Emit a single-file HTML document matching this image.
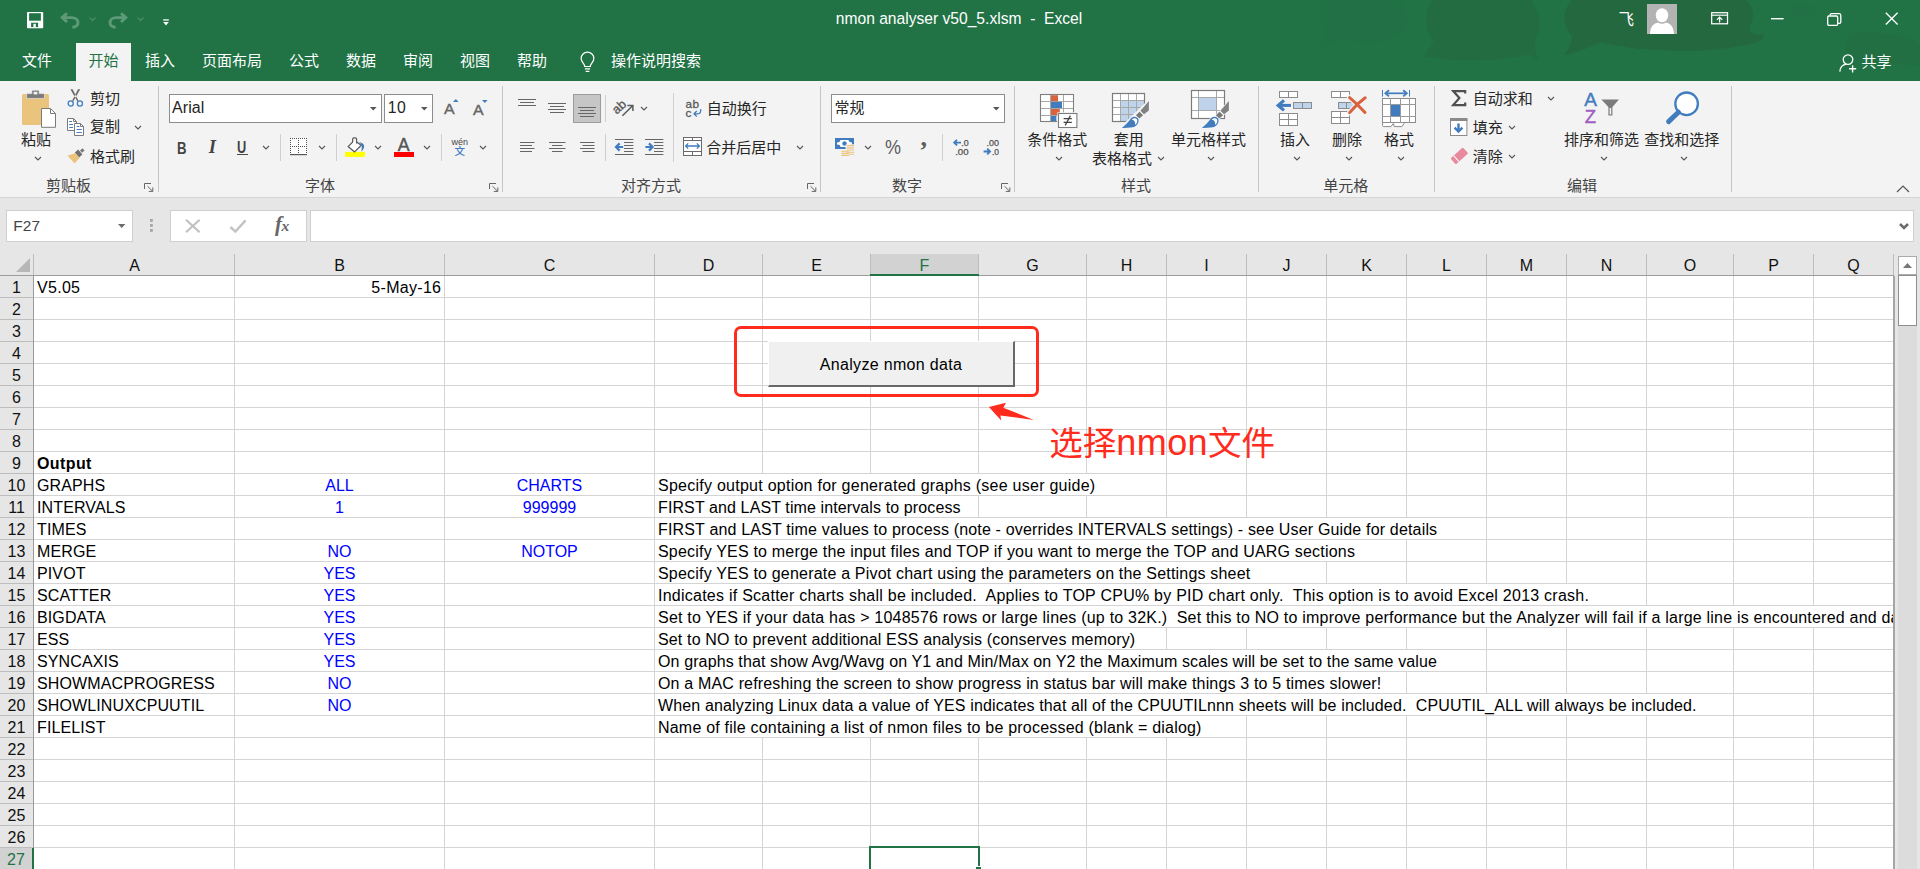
<!DOCTYPE html>
<html lang="zh-CN"><head><meta charset="utf-8"><title>nmon analyser v50_5.xlsm - Excel</title>
<style>
*{box-sizing:border-box;margin:0;padding:0}
html,body{width:1920px;height:869px;overflow:hidden;background:#fff}
body{position:relative;font-family:"Liberation Sans","Noto Sans CJK SC",sans-serif;font-size:15px;color:#262626}
.abs{position:absolute}
svg{position:absolute;overflow:visible}
/* title + tabs */
#title{position:absolute;left:0;top:0;width:1920px;height:81px;background:#217346;overflow:hidden}
#title .ttl{position:absolute;left:-1px;width:1920px;top:8.7px;text-align:center;color:#fff;font-size:15.62px;line-height:20px;white-space:pre}
.tab{position:absolute;top:43px;height:38px;line-height:35px;color:#fff;font-size:15px;white-space:nowrap}
.tab.act{background:#f3f3f3;color:#217346;left:76px;width:55px;text-align:center}
/* ribbon */
#ribbon{position:absolute;left:0;top:81px;width:1920px;height:117px;background:#f3f3f3;border-bottom:1px solid #d5d5d5}
#ribbon .t{position:absolute;white-space:nowrap;font-size:15px;line-height:20px;color:#262626}
#ribbon .gl{position:absolute;top:96px;font-size:15px;line-height:18px;color:#444;white-space:nowrap;transform:translateX(-50%)}
#ribbon .sep{position:absolute;top:6px;width:1px;height:105px;background:#c9c9c9}
#ribbon .msep{position:absolute;width:1px;height:27px;background:#d4d4d4}
/* formula bar */
#fbar{position:absolute;left:0;top:198px;width:1920px;height:57px;background:#e6e6e6}
#fbar .box{position:absolute;top:12px;height:32px;background:#fff;border:1px solid #cfcfcf}
/* grid */
#grid{position:absolute;left:0;top:0;width:1920px;height:869px;pointer-events:none}
.ch{position:absolute;top:254px;height:21px;line-height:23px;text-align:center;font-size:16px;color:#111;background:#e6e6e6}
.ch.sel{background:#d2d2d2;color:#217346;border-bottom:2px solid #217346;height:22px;z-index:3}
.chsep{position:absolute;top:254px;width:1px;height:21px;background:#bdbdbd}
.corner{position:absolute;left:16px;top:258px;width:0;height:0;border-left:14px solid transparent;border-bottom:14px solid #b7b7b7}
.rh{position:absolute;left:0;width:33px;height:21px;line-height:23px;text-align:center;font-size:16px;color:#111;background:#e6e6e6}
.rh.sel{background:#d2d2d2;color:#217346;border-right:2px solid #217346;width:34px;z-index:3}
.rhsep{position:absolute;left:0;width:33px;height:1px;background:#bdbdbd}
.hl{position:absolute;left:34px;width:1860px;height:1px;background:#d4d4d4}
.vl{position:absolute;top:276px;width:1px;height:593px;background:#d4d4d4}
.c{position:absolute;height:21px;line-height:23px;font-size:16px;color:#000;white-space:pre;overflow:hidden;font-family:"Liberation Sans",sans-serif}
.c.r{text-align:right}.c.b{font-weight:bold}.c.ctr{text-align:center}.c.blue{color:#0000ff}
.c.d{background:#fff;padding-left:3px}
#rb{position:absolute;left:0;top:0;width:1920px;height:197px}
#rb .t{position:absolute;white-space:nowrap;font-size:15px;line-height:20px;color:#262626}
#rb .gl{position:absolute;top:176px;font-size:15px;line-height:20px;color:#444;white-space:nowrap;transform:translateX(-50%)}
#rb .sep{position:absolute;top:86px;width:1px;height:106px;background:#c6c6c6}
#rb .msep{position:absolute;width:1px;background:#d0d0d0}

</style></head><body>
<div id="title">
<svg width="1920" height="81" viewBox="0 0 1920 81" style="left:0;top:0">
 <path d="M1322 0C1316 10 1318 22 1326 30C1326 38 1322 44 1318 48C1330 46 1338 42 1344 38C1360 44 1384 44 1398 36C1408 28 1408 12 1400 0Z" fill="#227045"/>
 <path d="M1432 0C1424 12 1424 30 1434 42C1430 48 1426 52 1424 56C1450 62 1500 62 1530 54C1532 58 1534 60 1538 60C1536 54 1536 48 1534 42C1544 28 1540 10 1530 0Z" fill="#236c42"/>
 <path d="M1572 0C1562 10 1562 26 1572 36C1572 44 1568 50 1564 55C1580 52 1592 46 1600 42C1640 52 1700 54 1740 46C1756 44 1764 40 1764 34C1756 36 1748 34 1750 26C1756 14 1752 6 1746 0Z" fill="#246840"/>
 <path d="M1792 6C1796 2 1806 2 1812 6C1818 10 1816 16 1808 16C1800 18 1790 12 1792 6Z" fill="#227045"/>
 <path d="M1846 40C1852 32 1870 30 1884 34C1900 34 1912 38 1920 44V66C1900 64 1870 64 1856 58C1848 54 1842 48 1846 40Z" fill="#226f44"/>
</svg>
<div class="ttl">nmon analyser v50_5.xlsm  -  Excel</div>
<!-- QAT -->
<svg width="17" height="17" viewBox="0 0 17 17" style="left:27px;top:12px"><rect x="0" y="0" width="16.2" height="16.2" rx=".8" fill="#fff"/><rect x="2.1" y="1.2" width="11.8" height="7.5" fill="#217346"/><rect x="4.1" y="10.7" width="7" height="4.4" fill="#217346"/><rect x="6.4" y="11.8" width="2.4" height="3.3" fill="#fff"/></svg>
<svg width="20" height="17" viewBox="0 0 20 17" style="left:60px;top:12px" fill="none" stroke="#5e9a78" stroke-width="2.9"><path d="M7 1.2L2.2 5.6L7 10"/><path d="M2.6 5.6H11.6C20 5.6 20 15.2 12.4 15.2"/></svg>
<svg width="8" height="5" viewBox="0 0 8 5" style="left:88.5px;top:17.2px" fill="none" stroke="#4f906c" stroke-width="1.2"><path d="M.6 .6L3.6 3.4L6.6 .6"/></svg>
<svg width="20" height="17" viewBox="0 0 20 17" style="left:108px;top:12px" fill="none" stroke="#5e9a78" stroke-width="2.9"><path d="M13 1.2L17.8 5.6L13 10"/><path d="M17.4 5.6H8.4C0 5.6 0 15.2 7.6 15.2"/></svg>
<svg width="8" height="5" viewBox="0 0 8 5" style="left:136.5px;top:17.2px" fill="none" stroke="#4f906c" stroke-width="1.2"><path d="M.6 .6L3.6 3.4L6.6 .6"/></svg>
<svg width="8" height="8" viewBox="0 0 8 8" style="left:162.6px;top:18.6px" fill="#fff"><rect x=".2" y=".3" width="5.6" height="1.3"/><path d="M.2 3.1H5.8L3 6.6Z"/></svg>
<!-- right controls -->
<div class="abs" style="left:1618.5px;top:8.5px;color:#fff;font-size:15.5px;line-height:22px">飞</div>
<div class="abs" style="left:1647px;top:4px;width:30px;height:30px;background:#b3b3b3;overflow:hidden">
 <svg width="30" height="30" viewBox="0 0 30 30" style="left:0;top:0" fill="#fff"><ellipse cx="15" cy="11.3" rx="6.2" ry="7"/><path d="M3 30 C3.5 22 7 19.5 11 18.6 C13.5 20.2 16.5 20.2 19 18.6 C23 19.5 26.5 22 27 30 Z"/></svg>
</div>
<svg width="17.2" height="12.5" viewBox="0 0 18 13" style="left:1711px;top:12.4px" fill="none" stroke="#fff" stroke-width="1.3"><rect x=".7" y=".7" width="16.6" height="11.6"/><path d="M.7 3.3h16.6" stroke-width="1.2"/><path d="M9 11V5.6M6.2 8.2L9 5.4L11.8 8.2"/></svg>
<svg width="14" height="2" viewBox="0 0 14 2" style="left:1771px;top:17.5px"><rect width="12.6" height="1.4" fill="#fff"/></svg>
<svg width="15" height="13" viewBox="0 0 15 13" style="left:1827px;top:12.5px" fill="none" stroke="#fff" stroke-width="1.3"><rect x=".7" y="3" width="10" height="9.3" rx="1.2"/><path d="M3.2 2.6V2Q3.2.7 4.6.7H12Q13.8.7 13.8 2.5V9Q13.8 10.3 12.6 10.3H11"/></svg>
<svg width="14" height="14" viewBox="0 0 14 14" style="left:1885px;top:12px" fill="none" stroke="#fff" stroke-width="1.4"><path d="M.8.8L12.6 12.6M12.6.8L.8 12.6"/></svg>
<!-- share -->
<svg width="20" height="19" viewBox="0 0 20 19" style="left:1839px;top:54px" fill="none" stroke="#fff" stroke-width="1.3"><circle cx="9" cy="5.6" r="4.8"/><path d="M.8 17.6C1.2 13 4 10.6 7.4 10.2"/><path d="M13.6 11.2v7.2M10 14.8h7.2" stroke-width="1.4"/></svg>
<div class="tab" style="left:1861.6px;top:44.4px;font-size:15px">共享</div>
<!-- tabs -->
<div class="tab" style="left:22px">文件</div>
<div class="tab act">开始</div>
<div class="tab" style="left:145px">插入</div>
<div class="tab" style="left:202px">页面布局</div>
<div class="tab" style="left:289px">公式</div>
<div class="tab" style="left:346px">数据</div>
<div class="tab" style="left:403px">审阅</div>
<div class="tab" style="left:460px">视图</div>
<div class="tab" style="left:517px">帮助</div>
<svg width="15" height="20.6" viewBox="0 0 16 22" style="left:580.4px;top:52px" fill="none" stroke="#fff" stroke-width="1.3"><path d="M5 15.5C5 12 1.2 11 1.2 7A6.8 6.8 0 0 1 14.8 7C14.8 11 11 12 11 15.5Z"/><path d="M5.2 18h5.6M6 20.6h4"/></svg>
<div class="tab" style="left:611px">操作说明搜索</div>
</div>
<div id="ribbon"></div><div id="rb">
<svg width="35" height="38" viewBox="0 0 35 38" style="left:22px;top:90px" >
<rect x="0" y="4" width="27" height="31" rx="1.6" fill="#eac37c"/>
<path d="M4.6 8.4V4.6Q4.6 3.6 5.6 3.6H9.8V1.2Q9.8 .2 10.8 .2H16.2Q17.2 .2 17.2 1.2V3.6H21.4Q22.4 3.6 22.4 4.6V8.4Z" fill="#7b7b7b" stroke="#f3f3f3" stroke-width=".6"/>
<rect x="11.6" y="1.8" width="3.8" height="2.6" fill="#f3f3f3"/>
<path d="M19.5 18.5H28.5L33.5 23.5V37.3H19.5Z" fill="#fff" stroke="#7a7a7a" stroke-width="1"/>
<path d="M28.5 18.5V23.5H33.5" fill="none" stroke="#7a7a7a" stroke-width="1"/></svg>
<div class="t" style="left:36px;top:130px;transform:translateX(-50%);">粘贴</div>
<svg width="8" height="5" viewBox="0 0 8 5" style="left:34px;top:156.0px" fill="none" stroke="#555" stroke-width="1.1"><path d="M1 1L4 4L7 1"/></svg>
<svg width="17" height="18" viewBox="0 0 17 18" style="left:67px;top:89px" ><path d="M3.4 .3L5.6 .3L11.4 11.6L10.2 12.2Z M13.2 .3L11 .3L5.2 11.6L6.4 12.2Z" fill="#6b6b6b"/>
<circle cx="3.7" cy="14.5" r="2.55" fill="none" stroke="#417dbe" stroke-width="1.3"/><circle cx="12.9" cy="14.5" r="2.55" fill="none" stroke="#417dbe" stroke-width="1.3"/></svg>
<div class="t" style="left:90px;top:88.7px;">剪切</div>
<svg width="18" height="19" viewBox="0 0 18 19" style="left:67px;top:118px" ><path d="M.5 .5H6.5L9.5 3.5V12.5H.5Z" fill="#fff" stroke="#7a7a7a" stroke-width="1"/><path d="M6.5 .5V3.5H9.5" fill="none" stroke="#7a7a7a" stroke-width="1"/>
<path d="M2.2 3.5H5M2.2 6.5H6M2.2 9.5H6" stroke="#417dbe" stroke-width="1"/>
<path d="M7.5 5.5H13.5L16.5 8.5V17.5H7.5Z" fill="#fff" stroke="#7a7a7a" stroke-width="1"/><path d="M13.5 5.5V8.5H16.5" fill="none" stroke="#7a7a7a" stroke-width="1"/>
<path d="M9.6 8.5H12.4M9.6 11.5H14.8M9.6 14.5H14.8" stroke="#417dbe" stroke-width="1"/></svg>
<div class="t" style="left:90px;top:117px;">复制</div>
<svg width="8" height="5" viewBox="0 0 8 5" style="left:134px;top:125.0px" fill="none" stroke="#555" stroke-width="1.1"><path d="M1 1L4 4L7 1"/></svg>
<svg width="18" height="16" viewBox="0 0 18 16" style="left:67px;top:148px" ><path d="M13 2.4L15.6 .2L17.6 2.6L15 4.8Z" fill="#7a7a7a"/><path d="M7.8 4.4L11.2 1.6L15.4 6.6L12 9.4Z" fill="#6f6f6f"/>
<path d="M.6 7.8L8.4 5L12.6 10L7.6 15.4Z" fill="#eac37c"/></svg>
<div class="t" style="left:90px;top:146.5px;">格式刷</div>
<div class="gl" style="left:68.5px">剪贴板</div>
<svg width="10" height="9" viewBox="0 0 10 9" style="left:144px;top:183px" fill="none" stroke="#666" stroke-width="1"><path d="M.5 6V.5H7"/><path d="M3.5 3.2L8.6 8.2M8.8 4.4V8.4H4.8"/></svg>
<div class="sep" style="left:158px"></div>
<div class="abs" style="left:169px;top:94px;width:213px;height:29px;background:#fff;border:1px solid #8c8c8c"></div>
<div class="abs" style="left:384px;top:94px;width:49px;height:29px;background:#fff;border:1px solid #8c8c8c"></div>
<div class="t" style="left:172px;top:98.3px;font-size:16px;line-height:20px;color:#262626;letter-spacing:.1px;font-family:'Liberation Sans',sans-serif">Arial</div>
<div class="t" style="left:387.8px;top:98.4px;font-size:15.8px;line-height:20px;color:#262626;letter-spacing:.3px;font-family:'Liberation Sans',sans-serif">10</div>
<svg width="7" height="4" viewBox="0 0 7 4" style="left:370px;top:107px" ><path d="M0 0H6.6L3.3 3.6Z" fill="#555"/></svg>
<svg width="7" height="4" viewBox="0 0 7 4" style="left:421px;top:107px" ><path d="M0 0H6.6L3.3 3.6Z" fill="#555"/></svg>
<div class="t" style="left:443.9px;top:98.5px;font-size:15px;line-height:20px;color:#666;-webkit-text-stroke:.4px #666;transform:scaleX(1.06);transform-origin:left;font-family:'Liberation Sans',sans-serif">A</div>
<svg width="6" height="3" viewBox="0 0 6 3" style="left:452.5px;top:99px" ><path d="M0 3H5.6L2.8 0Z" fill="#417dbe"/></svg>
<div class="t" style="left:472.9px;top:99.5px;font-size:15px;line-height:20px;color:#666;-webkit-text-stroke:.4px #666;transform:scaleX(1.06);transform-origin:left;font-family:'Liberation Sans',sans-serif">A</div>
<svg width="6" height="3" viewBox="0 0 6 3" style="left:481.5px;top:100px" ><path d="M0 0H5.6L2.8 3Z" fill="#417dbe"/></svg>
<div class="t" style="left:177.2px;top:137.5px;font-size:16.5px;font-weight:bold;color:#444;transform:scaleX(.8);transform-origin:left;font-family:'Liberation Sans',sans-serif">B</div>
<div class="t" style="left:208.8px;top:137.2px;font-size:18.5px;font-weight:bold;font-style:italic;color:#444;font-family:'Liberation Serif',serif">I</div>
<div class="t" style="left:237.4px;top:137.6px;font-size:16px;font-weight:bold;color:#444;transform:scaleX(.8);transform-origin:left;font-family:'Liberation Sans',sans-serif">U</div>
<div class="abs" style="left:237px;top:154px;width:11px;height:1px;background:#4a4a4a"></div>
<svg width="8" height="5" viewBox="0 0 8 5" style="left:262px;top:145.0px" fill="none" stroke="#555" stroke-width="1.1"><path d="M1 1L4 4L7 1"/></svg>
<div class="msep" style="left:280px;top:134px;height:27px"></div>
<svg width="18" height="18" viewBox="0 0 18 18" style="left:290px;top:138px" ><rect x="0" y="0" width="17" height="16" fill="#fff"/><g stroke="#4f4f4f" stroke-width="1" stroke-dasharray="1 1" fill="none"><path d="M0 .5H17M0 8.5H17"/><path d="M.5 0V16M8.5 0V16M16.5 0V16"/></g><path d="M0 16.6H17" stroke="#5a5a5a" stroke-width="1.2"/></svg>
<svg width="8" height="5" viewBox="0 0 8 5" style="left:318px;top:145.0px" fill="none" stroke="#555" stroke-width="1.1"><path d="M1 1L4 4L7 1"/></svg>
<div class="msep" style="left:336px;top:134px;height:27px"></div>
<svg width="21" height="20" viewBox="0 0 21 20" style="left:345px;top:137px" ><rect x="0" y="14.9" width="20" height="5" fill="#ffff00"/>
<path d="M3.1 9.6L9.4 3.3L16.2 8.3L9.6 14.9Z" fill="#fff"/>
<path d="M7.6 5.1L3.1 9.6L9.6 14.9L16.2 8.3L11.6 4.9" fill="none" stroke="#5a5a5a" stroke-width="1.3" stroke-linejoin="round"/>
<path d="M7.6 5.4V2.2Q7.6 .9 9 .9H10.2Q11.6 .9 11.6 2.2V6.6" fill="none" stroke="#5a5a5a" stroke-width="1.2"/>
<path d="M14.1 4.9Q19.4 6 19.2 9.4Q19 12.4 16.3 14.7Q17.2 11 16.5 8.6Q15.6 6.2 14.1 4.9Z" fill="#417dbe"/></svg>
<svg width="8" height="5" viewBox="0 0 8 5" style="left:374px;top:145.0px" fill="none" stroke="#555" stroke-width="1.1"><path d="M1 1L4 4L7 1"/></svg>
<div class="t" style="left:397.8px;top:135.2px;font-size:17.8px;color:#555;-webkit-text-stroke:.45px #555;font-family:'Liberation Sans',sans-serif">A</div>
<div class="abs" style="left:394px;top:152px;width:20px;height:5px;background:#ff0000"></div>
<svg width="8" height="5" viewBox="0 0 8 5" style="left:423px;top:145.0px" fill="none" stroke="#555" stroke-width="1.1"><path d="M1 1L4 4L7 1"/></svg>
<div class="msep" style="left:441px;top:134px;height:27px"></div>
<div class="t" style="left:451.6px;top:132px;font-size:9px;color:#444;font-family:'Liberation Sans',sans-serif;letter-spacing:-.1px">wén</div>
<div class="t" style="left:454.4px;top:140.7px;font-size:10.5px;color:#417dbe;font-weight:500">文</div>
<svg width="8" height="5" viewBox="0 0 8 5" style="left:479px;top:145.0px" fill="none" stroke="#555" stroke-width="1.1"><path d="M1 1L4 4L7 1"/></svg>
<div class="gl" style="left:320px">字体</div>
<svg width="10" height="9" viewBox="0 0 10 9" style="left:488.5px;top:183px" fill="none" stroke="#666" stroke-width="1"><path d="M.5 6V.5H7"/><path d="M3.5 3.2L8.6 8.2M8.8 4.4V8.4H4.8"/></svg>
<div class="sep" style="left:502px"></div>
<svg width="24" height="24" viewBox="0 0 24 24" style="left:518px;top:96px" ><path d="M0 3.5H18M2 6.5H16M0 9.5H18" stroke="#666" stroke-width="1" fill="none"/></svg>
<svg width="24" height="24" viewBox="0 0 24 24" style="left:548px;top:96px" ><path d="M0 7.5H18M2 10.5H16M0 13.5H18M2 16.5H16" stroke="#666" stroke-width="1" fill="none"/></svg>
<div class="abs" style="left:573px;top:94px;width:28px;height:29px;background:#c6c6c6;border:1px solid #9c9c9c"></div>
<svg width="24" height="24" viewBox="0 0 24 24" style="left:578px;top:96px" ><path d="M0 11.5H18M2 14.5H16M0 17.5H18M2 20.5H16" stroke="#666" stroke-width="1" fill="none"/></svg>
<div class="msep" style="left:605px;top:95px;height:27px"></div>
<svg width="22" height="21" viewBox="0 0 22 21" style="left:613px;top:97px" ><g transform="rotate(-43 8 8.4)"><text x="-1.4" y="12.4" font-family="Liberation Sans,sans-serif" font-size="12.6" fill="#595959" stroke="#595959" stroke-width=".35">ab</text></g><path d="M9.4 18.8L19.6 8.8M14.4 8.4H19.9V14" fill="none" stroke="#595959" stroke-width="1.5"/></svg>
<svg width="8" height="5" viewBox="0 0 8 5" style="left:640px;top:106.0px" fill="none" stroke="#555" stroke-width="1.1"><path d="M1 1L4 4L7 1"/></svg>
<svg width="24" height="24" viewBox="0 0 24 24" style="left:519.5px;top:139px" ><path d="M0 3.5H14.5M0 6.5H12M0 9.5H14.5M0 12.5H12" stroke="#666" stroke-width="1" fill="none"/></svg>
<svg width="24" height="24" viewBox="0 0 24 24" style="left:548.5px;top:139px" ><path d="M0 3.5H16.5M3 6.5H13.5M0 9.5H16.5M3 12.5H13.5" stroke="#666" stroke-width="1" fill="none"/></svg>
<svg width="24" height="24" viewBox="0 0 24 24" style="left:579.5px;top:139px" ><path d="M0 3.5H14.5M2.5 6.5H14.5M0 9.5H14.5M2.5 12.5H14.5" stroke="#666" stroke-width="1" fill="none"/></svg>
<div class="msep" style="left:605px;top:134px;height:27px"></div>
<svg width="19" height="17" viewBox="0 0 19 17" style="left:614.5px;top:139px" ><path d="M0 .5H18.4M9 3.5H18.4M9 6.5H18.4M9 9.5H18.4M9 12.5H18.4M0 15.5H18.4" stroke="#666" stroke-width="1" fill="none"/><path d="M1 8H8.2M4.6 4.4L1 8L4.6 11.6" stroke="#417dbe" stroke-width="2.2" fill="none"/></svg>
<svg width="19" height="17" viewBox="0 0 19 17" style="left:644.5px;top:139px" ><path d="M0 .5H18.4M9 3.5H18.4M9 6.5H18.4M9 9.5H18.4M9 12.5H18.4M0 15.5H18.4" stroke="#666" stroke-width="1" fill="none"/><path d="M.4 8H7.6M4 4.4L7.6 8L4 11.6" stroke="#417dbe" stroke-width="2.2" fill="none"/></svg>
<div class="msep" style="left:673px;top:93px;height:69px"></div>
<div class="t" style="left:685.5px;top:94px;font-size:11.8px;line-height:20px;color:#595959;-webkit-text-stroke:.3px #595959;font-family:'Liberation Sans',sans-serif;letter-spacing:.4px">ab</div>
<div class="t" style="left:685.5px;top:102.5px;font-size:11.8px;line-height:20px;color:#595959;-webkit-text-stroke:.3px #595959;font-family:'Liberation Sans',sans-serif">c</div>
<svg width="9" height="8" viewBox="0 0 9 8" style="left:693px;top:109px" ><path d="M7.6 .2Q8.4 4.8 4.6 4.8H1.2M3.8 2L1 4.8L3.8 7.6" fill="none" stroke="#417dbe" stroke-width="1.3"/></svg>
<div class="t" style="left:706.8px;top:98.6px;">自动换行</div>
<svg width="19" height="19" viewBox="0 0 19 19" style="left:683px;top:137px" ><rect x=".5" y=".5" width="18" height="18" fill="#fff" stroke="#6b6b6b" stroke-width="1"/><path d="M.5 3.5H18.5M.5 14.5H18.5M9.5 .5V3.5M9.5 14.5V18.5" stroke="#6b6b6b" stroke-width="1" fill="none"/><path d="M2.6 9H16.4M5.2 6.4L2.6 9L5.2 11.6M13.8 6.4L16.4 9L13.8 11.6" stroke="#417dbe" stroke-width="1.3" fill="none"/></svg>
<div class="t" style="left:706.3px;top:137.6px;">合并后居中</div>
<svg width="8" height="5" viewBox="0 0 8 5" style="left:796px;top:145.0px" fill="none" stroke="#555" stroke-width="1.1"><path d="M1 1L4 4L7 1"/></svg>
<div class="gl" style="left:651px">对齐方式</div>
<svg width="10" height="9" viewBox="0 0 10 9" style="left:806.5px;top:183px" fill="none" stroke="#666" stroke-width="1"><path d="M.5 6V.5H7"/><path d="M3.5 3.2L8.6 8.2M8.8 4.4V8.4H4.8"/></svg>
<div class="sep" style="left:820px"></div>
<div class="abs" style="left:831px;top:94px;width:174px;height:29px;background:#fff;border:1px solid #8c8c8c"></div>
<div class="t" style="left:834.5px;top:98.3px;">常规</div>
<svg width="7" height="4" viewBox="0 0 7 4" style="left:993px;top:107px" ><path d="M0 0H6.6L3.3 3.6Z" fill="#555"/></svg>
<svg width="20" height="19" viewBox="0 0 20 19" style="left:835px;top:138px" ><rect x="0" y="0" width="19" height="11" fill="#417dbe"/><rect x="2" y="2" width="15" height="7" fill="#fff"/><path d="M2 2H5.4Q5.4 4.4 2 4.4ZM17 2H13.6Q13.6 4.4 17 4.4ZM2 9H5.4Q5.4 6.6 2 6.6ZM17 9H13.6Q13.6 6.6 17 6.6Z" fill="#417dbe"/><circle cx="9.5" cy="5.5" r="2.2" fill="#417dbe"/>
<rect x="10.6" y="6.2" width="9.4" height="10.6" rx="1.6" fill="#f3f3f3"/><rect x="5.4" y="11.6" width="9.4" height="8" rx="1.6" fill="#f3f3f3"/>
<g stroke="#eac37c" stroke-width="1.15" stroke-linecap="round" fill="none"><path d="M12 7.6H18.6M12 9.8H18.6M12 12H18.6M12 14.2H18.6M14.4 16.2H18.6"/><path d="M6.8 13.2H13.4M6.8 15.3H13.4M6.8 17.4H13.4"/></g></svg>
<svg width="8" height="5" viewBox="0 0 8 5" style="left:864px;top:145.0px" fill="none" stroke="#555" stroke-width="1.1"><path d="M1 1L4 4L7 1"/></svg>
<div class="t" style="left:885.2px;top:136.2px;font-size:20px;line-height:22px;color:#5c5c5c;font-family:'Liberation Sans',sans-serif;transform:scaleX(.9);transform-origin:left">%</div>
<div class="t" style="left:920.6px;top:123.4px;font-size:26px;line-height:30px;color:#5c5c5c;font-family:'Liberation Serif',serif;font-weight:bold">,</div>
<div class="msep" style="left:942px;top:134px;height:27px"></div>
<svg width="17" height="17" viewBox="0 0 17 17" style="left:952.5px;top:139px" ><text x='8.2' y='6.9' textLength='7.4' lengthAdjust='spacingAndGlyphs' font-family='Liberation Sans,sans-serif' font-size='9.6' fill='#4f4f4f' stroke='#4f4f4f' stroke-width='.25'>.0</text><text x='2.2' y='15.9' textLength='13.4' lengthAdjust='spacingAndGlyphs' font-family='Liberation Sans,sans-serif' font-size='9.6' fill='#4f4f4f' stroke='#4f4f4f' stroke-width='.25'>.00</text><path d='M1.4 3.6H8M4 .8L1.2 3.6L4 6.4' stroke='#417dbe' stroke-width='1.9' fill='none'/></svg>
<svg width="17" height="17" viewBox="0 0 17 17" style="left:982.5px;top:139px" ><text x='3.6' y='6.9' textLength='12.4' lengthAdjust='spacingAndGlyphs' font-family='Liberation Sans,sans-serif' font-size='9.6' fill='#4f4f4f' stroke='#4f4f4f' stroke-width='.25'>.00</text><text x='9' y='15.9' textLength='7' lengthAdjust='spacingAndGlyphs' font-family='Liberation Sans,sans-serif' font-size='9.6' fill='#4f4f4f' stroke='#4f4f4f' stroke-width='.25'>.0</text><path d='M.6 12.5H7M4.2 9.7L7 12.5L4.2 15.3' stroke='#417dbe' stroke-width='1.9' fill='none'/></svg>
<div class="gl" style="left:907px">数字</div>
<svg width="10" height="9" viewBox="0 0 10 9" style="left:1000.5px;top:183px" fill="none" stroke="#666" stroke-width="1"><path d="M.5 6V.5H7"/><path d="M3.5 3.2L8.6 8.2M8.8 4.4V8.4H4.8"/></svg>
<div class="sep" style="left:1014px"></div>
<svg width="38" height="36" viewBox="0 0 38 36" style="left:1040px;top:93px" ><rect x=".5" y="1.5" width="33" height="27" fill="#fff"/>
<path d="M.5 8.5H33.5M.5 15.5H33.5M.5 22.5H33.5M10.5 1.5V28.5M23.5 1.5V28.5" stroke="#a8a8a8" stroke-width="1" fill="none"/><rect x=".5" y="1.5" width="33" height="27" fill="none" stroke="#808080" stroke-width="1.1"/>
<rect x="11" y="2.2" width="7" height="6" fill="#d9623f"/><rect x="11" y="9" width="11" height="6" fill="#417dbe"/><rect x="11" y="16" width="8.8" height="6" fill="#d9623f"/><rect x="11" y="23" width="5.4" height="5" fill="#417dbe"/>
<rect x="18.5" y="20.5" width="18.4" height="14" fill="#fff" stroke="#f5f5f5" stroke-width="2.4"/><rect x="18.5" y="20.5" width="18.4" height="14" fill="#fff" stroke="#7c7c7c" stroke-width="1.1"/>
<path d="M23.6 25.6H31.8M23.6 29.4H31.8M30.4 22.6L25.2 32.4" stroke="#444" stroke-width="1.25" fill="none"/></svg>
<div class="t" style="left:1057.2px;top:129.8px;transform:translateX(-50%);">条件格式</div>
<svg width="8" height="5" viewBox="0 0 8 5" style="left:1055px;top:156.0px" fill="none" stroke="#555" stroke-width="1.1"><path d="M1 1L4 4L7 1"/></svg>
<svg width="40" height="37" viewBox="0 0 40 37" style="left:1112px;top:92px" ><rect x=".5" y="1.5" width="32" height="28" fill="#fff"/>
<rect x="8.5" y="8.5" width="24" height="21" fill="#bfd4ea"/>
<path d="M.5 8.5H32.5M.5 15.5H32.5M.5 22.5H32.5M8.5 1.5V29.5M16.5 1.5V29.5M24.5 1.5V29.5" stroke="#a8a8a8" stroke-width="1" fill="none"/><rect x=".5" y="1.5" width="32" height="28" fill="none" stroke="#7c7c7c" stroke-width="1.2"/><path d="M33.6 10.4V31H12.6Z" fill="#f3f3f3"/><g transform="translate(0 0)" stroke="#f5f5f5" stroke-width="1.3" paint-order="stroke" stroke-linejoin="round"><path d="M36.9 9V18.4L32 22.3L28.4 18.7Z" fill="#828282"/><path d="M27.5 19.8L31.1 23.3L27.3 26.4L23.9 23.3Z" fill="#7a7a7a"/>
<path d="M9.9 35.9Q15 31.6 17.4 28.4Q19.6 24.6 22.8 24.8Q26.6 25.4 26.6 29Q26.2 32.6 22.6 34.8Q20 36 9.9 35.9Z" fill="#417dbe"/><path d="M19.8 27.6Q21.4 25.9 23.4 26.2Q25.4 26.8 25.4 29Q25.2 31.4 23.2 33Q23.6 28.6 19.8 27.6Z" fill="#fff" stroke="none"/></g></svg>
<div class="t" style="left:1128.7px;top:129.8px;transform:translateX(-50%);">套用</div>
<div class="t" style="left:1092px;top:148.5px;">表格格式</div>
<svg width="8" height="5" viewBox="0 0 8 5" style="left:1157px;top:156.0px" fill="none" stroke="#555" stroke-width="1.1"><path d="M1 1L4 4L7 1"/></svg>
<svg width="40" height="39" viewBox="0 0 40 39" style="left:1191px;top:90px" ><rect x=".5" y=".5" width="33" height="28" fill="#fff"/>
<rect x="7.5" y="7.5" width="18" height="13" fill="#bfd4ea"/>
<path d="M.5 7.5H33.5M.5 20.5H33.5M7.5 .5V28.5M25.5 .5V28.5" stroke="#a8a8a8" stroke-width="1" fill="none"/><rect x=".5" y=".5" width="33" height="28" fill="none" stroke="#7c7c7c" stroke-width="1.2"/><g transform="translate(1 2)" stroke="#f5f5f5" stroke-width="1.3" paint-order="stroke" stroke-linejoin="round"><path d="M36.9 9V18.4L32 22.3L28.4 18.7Z" fill="#828282"/><path d="M27.5 19.8L31.1 23.3L27.3 26.4L23.9 23.3Z" fill="#7a7a7a"/>
<path d="M9.9 35.9Q15 31.6 17.4 28.4Q19.6 24.6 22.8 24.8Q26.6 25.4 26.6 29Q26.2 32.6 22.6 34.8Q20 36 9.9 35.9Z" fill="#417dbe"/><path d="M19.8 27.6Q21.4 25.9 23.4 26.2Q25.4 26.8 25.4 29Q25.2 31.4 23.2 33Q23.6 28.6 19.8 27.6Z" fill="#fff" stroke="none"/></g></svg>
<div class="t" style="left:1208.6px;top:129.8px;transform:translateX(-50%);">单元格样式</div>
<svg width="8" height="5" viewBox="0 0 8 5" style="left:1207px;top:156.0px" fill="none" stroke="#555" stroke-width="1.1"><path d="M1 1L4 4L7 1"/></svg>
<div class="gl" style="left:1136px">样式</div>
<div class="sep" style="left:1258px"></div>
<svg width="40" height="37" viewBox="0 0 40 37" style="left:1275px;top:90px" ><rect x="4.5" y="1.5" width="18" height="6" fill="#fff" stroke="#8c8c8c" stroke-width="1"/><path d="M13.5 1.5V7.5" stroke="#8c8c8c" stroke-width="1"/><rect x="18.5" y="12.5" width="18" height="6" fill="#bfd4ea" stroke="#8c8c8c" stroke-width="1"/><path d="M27.5 12.5V18.5" stroke="#8c8c8c" stroke-width="1"/><rect x="4.5" y="23.5" width="18" height="12" fill="#fff" stroke="#8c8c8c" stroke-width="1"/><path d="M13.5 23.5V35.5" stroke="#8c8c8c" stroke-width="1"/><path d="M4.5 29.5H22.5" stroke="#8c8c8c" stroke-width="1"/><path d="M3.4 15.4H16" stroke="#417dbe" stroke-width="3" fill="none"/><path d="M9 10.4L3.2 15.4L9 20.4" stroke="#417dbe" stroke-width="3.2" fill="none" stroke-linejoin="miter"/></svg>
<div class="t" style="left:1295px;top:129.8px;transform:translateX(-50%);">插入</div>
<svg width="8" height="5" viewBox="0 0 8 5" style="left:1293px;top:156.0px" fill="none" stroke="#555" stroke-width="1.1"><path d="M1 1L4 4L7 1"/></svg>
<svg width="38" height="36" viewBox="0 0 38 36" style="left:1330px;top:90px" ><rect x="1.5" y="1.5" width="18" height="6" fill="#fff" stroke="#8c8c8c" stroke-width="1"/><path d="M10.5 1.5V7.5" stroke="#8c8c8c" stroke-width="1"/><rect x="8.5" y="12.5" width="16" height="6" fill="#bfd4ea" stroke="#8c8c8c" stroke-width="1"/><path d="M16.5 12.5V18.5" stroke="#8c8c8c" stroke-width="1"/><rect x="1.5" y="21.5" width="18" height="12" fill="#fff" stroke="#8c8c8c" stroke-width="1"/><path d="M10.5 21.5V33.5" stroke="#8c8c8c" stroke-width="1"/><path d="M1.5 27.5H19.5" stroke="#8c8c8c" stroke-width="1"/><path d="M19.6 7.6Q27 13.6 35 22.4M35.2 7.8Q27 13.6 19.6 22.6" stroke="#f3f3f3" stroke-width="5.4" fill="none" stroke-linecap="round"/><path d="M19.6 7.6Q27 13.6 35 22.4M35.2 7.8Q27 13.6 19.6 22.6" stroke="#d9623f" stroke-width="3" fill="none" stroke-linecap="round"/></svg>
<div class="t" style="left:1347px;top:129.8px;transform:translateX(-50%);">删除</div>
<svg width="8" height="5" viewBox="0 0 8 5" style="left:1345px;top:156.0px" fill="none" stroke="#555" stroke-width="1.1"><path d="M1 1L4 4L7 1"/></svg>
<svg width="37" height="38" viewBox="0 0 37 38" style="left:1381px;top:89px" ><path d="M1.5 1V7.6M28.5 1V7.6" stroke="#417dbe" stroke-width="1"/><path d="M4.6 4.3H25.6" stroke="#417dbe" stroke-width="1.7" fill="none"/><path d="M8 1.2L4.4 4.3L8 7.4M22.2 1.2L25.8 4.3L22.2 7.4" stroke="#417dbe" stroke-width="1.8" fill="none"/>
<path d="M1.6 33.5V36.6Q1.6 37.6 2.6 37.6H10.1L12.1 34.6L12.5 34.7L13.3 37.6H21L23.6 33.5Z" fill="#fff" stroke="#8c8c8c" stroke-width="1" stroke-linejoin="round"/>
<rect x="1.5" y="9.5" width="33" height="24" fill="#fff" stroke="#8c8c8c" stroke-width="1"/>
<path d="M1.5 15.5H34.5M1.5 27.5H34.5M9.5 9.5V33.5M19.5 9.5V33.5M28.5 9.5V33.5" stroke="#9a9a9a" stroke-width="1" fill="none"/>
<rect x="10" y="16" width="9" height="11" fill="#417dbe"/></svg>
<div class="t" style="left:1399px;top:129.8px;transform:translateX(-50%);">格式</div>
<svg width="8" height="5" viewBox="0 0 8 5" style="left:1397px;top:156.0px" fill="none" stroke="#555" stroke-width="1.1"><path d="M1 1L4 4L7 1"/></svg>
<div class="gl" style="left:1345.8px">单元格</div>
<div class="sep" style="left:1434px"></div>
<svg width="17" height="17" viewBox="0 0 17 17" style="left:1450px;top:90px" ><path d="M15.2 3.6V1.1H3.2L9.4 8.1L3.2 15.1H15.2V12.6" fill="none" stroke="#505050" stroke-width="2.2" stroke-linejoin="miter"/></svg>
<div class="t" style="left:1472.7px;top:88.6px;">自动求和</div>
<svg width="8" height="5" viewBox="0 0 8 5" style="left:1547px;top:96.0px" fill="none" stroke="#555" stroke-width="1.1"><path d="M1 1L4 4L7 1"/></svg>
<svg width="18" height="18" viewBox="0 0 18 18" style="left:1450px;top:118px" ><rect x=".5" y="1.5" width="16.4" height="16" fill="#fff" stroke="#8a8a8a" stroke-width="1"/><rect x="0" y="0" width="17.4" height="3" fill="#8a8a8a"/><path d="M8.5 5.4V13.4M4.6 9.6L8.5 13.6L12.4 9.6" stroke="#417dbe" stroke-width="2.4" fill="none"/></svg>
<div class="t" style="left:1472.8px;top:117.8px;">填充</div>
<svg width="8" height="5" viewBox="0 0 8 5" style="left:1508px;top:125.0px" fill="none" stroke="#555" stroke-width="1.1"><path d="M1 1L4 4L7 1"/></svg>
<svg width="17" height="17" viewBox="0 0 17 17" style="left:1451px;top:148px" ><g transform="rotate(-42 8 8)"><rect x="0" y="4.2" width="16.6" height="8" rx="1" fill="#e8899d"/><rect x="3.6" y="4.2" width="1.2" height="8" fill="#f3f3f3"/></g></svg>
<div class="t" style="left:1472.8px;top:146.8px;">清除</div>
<svg width="8" height="5" viewBox="0 0 8 5" style="left:1508px;top:154.0px" fill="none" stroke="#555" stroke-width="1.1"><path d="M1 1L4 4L7 1"/></svg>
<div class="t" style="left:1584.3px;top:88.5px;font-size:19px;line-height:22px;color:#417dbe;-webkit-text-stroke:.45px #417dbe;font-family:'Liberation Sans',sans-serif">A</div>
<div class="t" style="left:1584.8px;top:105.6px;font-size:18.5px;line-height:22px;color:#a05cc0;-webkit-text-stroke:.45px #a05cc0;font-family:'Liberation Sans',sans-serif">Z</div>
<svg width="19" height="17" viewBox="0 0 19 17" style="left:1601px;top:99px" ><path d="M.4 .4H18L11.4 8V16.4H7.4V8Z" fill="#7b7b7b"/><path d="M8.6 9V15.4H10.2V9Z" fill="#f3f3f3"/></svg>
<div class="t" style="left:1601.5px;top:130px;transform:translateX(-50%);">排序和筛选</div>
<svg width="8" height="5" viewBox="0 0 8 5" style="left:1600px;top:156.0px" fill="none" stroke="#555" stroke-width="1.1"><path d="M1 1L4 4L7 1"/></svg>
<svg width="36" height="36" viewBox="0 0 36 36" style="left:1665px;top:90px" ><circle cx="21.6" cy="13.8" r="11.3" fill="#fff" stroke="#417dbe" stroke-width="2.3"/><path d="M13.4 22.2L3.6 31.6" stroke="#417dbe" stroke-width="5" stroke-linecap="round"/></svg>
<div class="t" style="left:1681.7px;top:130px;transform:translateX(-50%);">查找和选择</div>
<svg width="8" height="5" viewBox="0 0 8 5" style="left:1680px;top:156.0px" fill="none" stroke="#555" stroke-width="1.1"><path d="M1 1L4 4L7 1"/></svg>
<div class="gl" style="left:1582px">编辑</div>
<div class="sep" style="left:1731px"></div>
<svg width="14" height="8" viewBox="0 0 14 8" style="left:1896px;top:185px" ><path d="M1 7L7 1L13 7" fill="none" stroke="#555" stroke-width="1.2"/></svg>
</div><div id="fbar">
 <div class="box" style="left:6px;width:127px"></div>
 <div class="abs" style="left:13.2px;top:17.4px;font-size:15.4px;line-height:22px;color:#444;letter-spacing:.2px">F27</div>
 <svg width="8" height="4" viewBox="0 0 8 4" style="left:117.6px;top:26px"><path d="M0 0h7.4L3.7 4z" fill="#6a6a6a"/></svg>
 <svg width="3" height="14" viewBox="0 0 3 14" style="left:150px;top:21px" fill="#a6a6a6"><rect x="0" y="0" width="2.8" height="2.8"/><rect x="0" y="5" width="2.8" height="2.8"/><rect x="0" y="10" width="2.8" height="2.8"/></svg>
 <div class="box" style="left:170px;width:137px"></div>
 <svg width="16" height="14" viewBox="0 0 16 14" style="left:185px;top:21px" fill="none" stroke="#c0c0c0" stroke-width="2.1"><path d="M1 .8L14.6 13.2M14.6.8L1 13.2"/></svg>
 <svg width="18" height="14" viewBox="0 0 18 14" style="left:229px;top:21px" fill="none" stroke="#c3c3c3" stroke-width="2.4"><path d="M1.4 8L6.4 12.6L16.6 1.4"/></svg>
 <div class="abs" style="left:275px;top:13.5px;font-family:'Liberation Serif',serif;font-style:italic;font-weight:bold;font-size:21px;line-height:24px;color:#666;letter-spacing:-.5px">f<span style="font-size:15.5px">x</span></div>
 <div class="box" style="left:310px;width:1604px"></div>
 <svg width="10" height="7" viewBox="0 0 10 7" style="left:1899px;top:24.6px" fill="none" stroke="#6a6a6a" stroke-width="2.5"><path d="M1 1L5 5L9 1"/></svg>
</div>

<div id="grid">
<div class="abs" style="left:0;top:255px;width:1894px;height:21px;background:#e6e6e6"></div>
<div class="ch" style="left:35px;width:199px">A</div>
<div class="chsep" style="left:234px"></div>
<div class="ch" style="left:235px;width:209px">B</div>
<div class="chsep" style="left:444px"></div>
<div class="ch" style="left:445px;width:209px">C</div>
<div class="chsep" style="left:654px"></div>
<div class="ch" style="left:655px;width:107px">D</div>
<div class="chsep" style="left:762px"></div>
<div class="ch" style="left:763px;width:107px">E</div>
<div class="chsep" style="left:870px"></div>
<div class="ch sel" style="left:871px;width:107px">F</div>
<div class="chsep" style="left:978px"></div>
<div class="ch" style="left:979px;width:107px">G</div>
<div class="chsep" style="left:1086px"></div>
<div class="ch" style="left:1087px;width:79px">H</div>
<div class="chsep" style="left:1166px"></div>
<div class="ch" style="left:1167px;width:79px">I</div>
<div class="chsep" style="left:1246px"></div>
<div class="ch" style="left:1247px;width:79px">J</div>
<div class="chsep" style="left:1326px"></div>
<div class="ch" style="left:1327px;width:79px">K</div>
<div class="chsep" style="left:1406px"></div>
<div class="ch" style="left:1407px;width:79px">L</div>
<div class="chsep" style="left:1486px"></div>
<div class="ch" style="left:1487px;width:79px">M</div>
<div class="chsep" style="left:1566px"></div>
<div class="ch" style="left:1567px;width:79px">N</div>
<div class="chsep" style="left:1646px"></div>
<div class="ch" style="left:1647px;width:86px">O</div>
<div class="chsep" style="left:1733px"></div>
<div class="ch" style="left:1734px;width:79px">P</div>
<div class="chsep" style="left:1813px"></div>
<div class="ch" style="left:1814px;width:79px">Q</div>
<div class="chsep" style="left:1893px"></div>
<div class="chsep" style="left:33px"></div>
<div class="corner"></div>
<div class="rh" style="top:276px">1</div>
<div class="rhsep" style="top:297px"></div>
<div class="rh" style="top:298px">2</div>
<div class="rhsep" style="top:319px"></div>
<div class="rh" style="top:320px">3</div>
<div class="rhsep" style="top:341px"></div>
<div class="rh" style="top:342px">4</div>
<div class="rhsep" style="top:363px"></div>
<div class="rh" style="top:364px">5</div>
<div class="rhsep" style="top:385px"></div>
<div class="rh" style="top:386px">6</div>
<div class="rhsep" style="top:407px"></div>
<div class="rh" style="top:408px">7</div>
<div class="rhsep" style="top:429px"></div>
<div class="rh" style="top:430px">8</div>
<div class="rhsep" style="top:451px"></div>
<div class="rh" style="top:452px">9</div>
<div class="rhsep" style="top:473px"></div>
<div class="rh" style="top:474px">10</div>
<div class="rhsep" style="top:495px"></div>
<div class="rh" style="top:496px">11</div>
<div class="rhsep" style="top:517px"></div>
<div class="rh" style="top:518px">12</div>
<div class="rhsep" style="top:539px"></div>
<div class="rh" style="top:540px">13</div>
<div class="rhsep" style="top:561px"></div>
<div class="rh" style="top:562px">14</div>
<div class="rhsep" style="top:583px"></div>
<div class="rh" style="top:584px">15</div>
<div class="rhsep" style="top:605px"></div>
<div class="rh" style="top:606px">16</div>
<div class="rhsep" style="top:627px"></div>
<div class="rh" style="top:628px">17</div>
<div class="rhsep" style="top:649px"></div>
<div class="rh" style="top:650px">18</div>
<div class="rhsep" style="top:671px"></div>
<div class="rh" style="top:672px">19</div>
<div class="rhsep" style="top:693px"></div>
<div class="rh" style="top:694px">20</div>
<div class="rhsep" style="top:715px"></div>
<div class="rh" style="top:716px">21</div>
<div class="rhsep" style="top:737px"></div>
<div class="rh" style="top:738px">22</div>
<div class="rhsep" style="top:759px"></div>
<div class="rh" style="top:760px">23</div>
<div class="rhsep" style="top:781px"></div>
<div class="rh" style="top:782px">24</div>
<div class="rhsep" style="top:803px"></div>
<div class="rh" style="top:804px">25</div>
<div class="rhsep" style="top:825px"></div>
<div class="rh" style="top:826px">26</div>
<div class="rhsep" style="top:847px"></div>
<div class="rh sel" style="top:848px">27</div>
<div class="rhsep" style="top:869px"></div>
<div class="hl" style="top:297px"></div>
<div class="hl" style="top:319px"></div>
<div class="hl" style="top:341px"></div>
<div class="hl" style="top:363px"></div>
<div class="hl" style="top:385px"></div>
<div class="hl" style="top:407px"></div>
<div class="hl" style="top:429px"></div>
<div class="hl" style="top:451px"></div>
<div class="hl" style="top:473px"></div>
<div class="hl" style="top:495px"></div>
<div class="hl" style="top:517px"></div>
<div class="hl" style="top:539px"></div>
<div class="hl" style="top:561px"></div>
<div class="hl" style="top:583px"></div>
<div class="hl" style="top:605px"></div>
<div class="hl" style="top:627px"></div>
<div class="hl" style="top:649px"></div>
<div class="hl" style="top:671px"></div>
<div class="hl" style="top:693px"></div>
<div class="hl" style="top:715px"></div>
<div class="hl" style="top:737px"></div>
<div class="hl" style="top:759px"></div>
<div class="hl" style="top:781px"></div>
<div class="hl" style="top:803px"></div>
<div class="hl" style="top:825px"></div>
<div class="hl" style="top:847px"></div>
<div class="hl" style="top:869px"></div>
<div class="vl" style="left:234px"></div>
<div class="vl" style="left:444px"></div>
<div class="vl" style="left:654px"></div>
<div class="vl" style="left:762px"></div>
<div class="vl" style="left:870px"></div>
<div class="vl" style="left:978px"></div>
<div class="vl" style="left:1086px"></div>
<div class="vl" style="left:1166px"></div>
<div class="vl" style="left:1246px"></div>
<div class="vl" style="left:1326px"></div>
<div class="vl" style="left:1406px"></div>
<div class="vl" style="left:1486px"></div>
<div class="vl" style="left:1566px"></div>
<div class="vl" style="left:1646px"></div>
<div class="vl" style="left:1733px"></div>
<div class="vl" style="left:1813px"></div>
<div class="vl" style="left:1893px"></div>
<div class="c " style="top:276px;left:37px;width:190px;letter-spacing:.3px">V5.05</div>
<div class="c r" style="top:276px;left:236px;width:205.3px;letter-spacing:.3px">5-May-16</div>
<div class="c b" style="top:452px;left:37px;width:190px;letter-spacing:.4px">Output</div>
<div class="c " style="top:474px;left:37px;width:195px;letter-spacing:.12px">GRAPHS</div>
<div class="c " style="top:496px;left:37px;width:195px;letter-spacing:.12px">INTERVALS</div>
<div class="c " style="top:518px;left:37px;width:195px;letter-spacing:.12px">TIMES</div>
<div class="c " style="top:540px;left:37px;width:195px;letter-spacing:.12px">MERGE</div>
<div class="c " style="top:562px;left:37px;width:195px;letter-spacing:.12px">PIVOT</div>
<div class="c " style="top:584px;left:37px;width:195px;letter-spacing:.12px">SCATTER</div>
<div class="c " style="top:606px;left:37px;width:195px;letter-spacing:.12px">BIGDATA</div>
<div class="c " style="top:628px;left:37px;width:195px;letter-spacing:.12px">ESS</div>
<div class="c " style="top:650px;left:37px;width:195px;letter-spacing:.12px">SYNCAXIS</div>
<div class="c " style="top:672px;left:37px;width:195px;letter-spacing:.12px">SHOWMACPROGRESS</div>
<div class="c " style="top:694px;left:37px;width:195px;letter-spacing:.12px">SHOWLINUXCPUUTIL</div>
<div class="c " style="top:716px;left:37px;width:195px;letter-spacing:.12px">FILELIST</div>
<div class="c ctr blue" style="top:474px;left:235px;width:209px;">ALL</div>
<div class="c ctr blue" style="top:496px;left:235px;width:209px;">1</div>
<div class="c ctr blue" style="top:540px;left:235px;width:209px;">NO</div>
<div class="c ctr blue" style="top:562px;left:235px;width:209px;">YES</div>
<div class="c ctr blue" style="top:584px;left:235px;width:209px;">YES</div>
<div class="c ctr blue" style="top:606px;left:235px;width:209px;">YES</div>
<div class="c ctr blue" style="top:628px;left:235px;width:209px;">YES</div>
<div class="c ctr blue" style="top:650px;left:235px;width:209px;">YES</div>
<div class="c ctr blue" style="top:672px;left:235px;width:209px;">NO</div>
<div class="c ctr blue" style="top:694px;left:235px;width:209px;">NO</div>
<div class="c ctr blue" style="top:474px;left:445px;width:209px;">CHARTS</div>
<div class="c ctr blue" style="top:496px;left:445px;width:209px;">999999</div>
<div class="c ctr blue" style="top:540px;left:445px;width:209px;">NOTOP</div>
<div class="c d" id="d10" style="top:474px;left:655px;width:511px;letter-spacing:0.2534px">Specify output option for generated graphs (see user guide)</div>
<div class="c d" id="d11" style="top:496px;left:655px;width:323px;letter-spacing:0.1103px">FIRST and LAST time intervals to process</div>
<div class="c d" id="d12" style="top:518px;left:655px;width:831px;letter-spacing:0.168px">FIRST and LAST time values to process (note - overrides INTERVALS settings) - see User Guide for details</div>
<div class="c d" id="d13" style="top:540px;left:655px;width:751px;letter-spacing:0.1967px">Specify YES to merge the input files and TOP if you want to merge the TOP and UARG sections</div>
<div class="c d" id="d14" style="top:562px;left:655px;width:671px;letter-spacing:0.1937px">Specify YES to generate a Pivot chart using the parameters on the Settings sheet</div>
<div class="c d" id="d15" style="top:584px;left:655px;width:991px;letter-spacing:0.2461px">Indicates if Scatter charts shall be included.  Applies to TOP CPU% by PID chart only.  This option is to avoid Excel 2013 crash.</div>
<div class="c d" id="d16" style="top:606px;left:655px;width:1238px;letter-spacing:0.2096px">Set to YES if your data has &gt; 1048576 rows or large lines (up to 32K.)  Set this to NO to improve performance but the Analyzer will fail if a large line is encountered and data may be lost</div>
<div class="c d" id="d17" style="top:628px;left:655px;width:511px;letter-spacing:0.1516px">Set to NO to prevent additional ESS analysis (conserves memory)</div>
<div class="c d" id="d18" style="top:650px;left:655px;width:831px;letter-spacing:0.12px">On graphs that show Avg/Wavg on Y1 and Min/Max on Y2 the Maximum scales will be set to the same value</div>
<div class="c d" id="d19" style="top:672px;left:655px;width:751px;letter-spacing:0.1663px">On a MAC refreshing the screen to show progress in status bar will make things 3 to 5 times slower!</div>
<div class="c d" id="d20" style="top:694px;left:655px;width:1078px;letter-spacing:0.1388px">When analyzing Linux data a value of YES indicates that all of the CPUUTILnnn sheets will be included.  CPUUTIL_ALL will always be included.</div>
<div class="c d" id="d21" style="top:716px;left:655px;width:591px;letter-spacing:0.2053px">Name of file containing a list of nmon files to be processed (blank = dialog)</div>
</div>
<!-- scrollbar -->
<div class="abs" style="left:1894px;top:255px;width:26px;height:614px;background:#e6e6e6"></div>
<div class="abs" style="left:1893px;top:276px;width:2px;height:593px;background:#a6a6a6"></div>
<div class="abs" style="left:1898px;top:275px;width:19px;height:594px;background:#dcdcdc"></div>
<div class="abs" style="left:1898px;top:256px;width:19px;height:19px;background:#fff;border:1px solid #ababab"></div>
<svg width="9" height="5" viewBox="0 0 9 5" style="left:1903px;top:263px"><path d="M0 5h9L4.5 0z" fill="#777"/></svg>
<div class="abs" style="left:1898px;top:275px;width:19px;height:51px;background:#fff;border:1px solid #8f8f8f"></div>
<!-- header bottom line -->
<div class="abs" style="left:0;top:275px;width:1894px;height:1px;background:#9b9b9b"></div>
<div class="abs" style="left:33px;top:276px;width:1px;height:593px;background:#9b9b9b"></div>
<div class="abs" style="left:870px;top:274px;width:109px;height:2px;background:#217346;z-index:4"></div>
<div class="abs" style="left:32px;top:848px;width:2px;height:21px;background:#217346;z-index:4"></div>
<!-- button -->
<div class="abs" style="left:768px;top:341px;width:247px;height:46px;background:#f0f0f0;border-top:1px solid #fff;border-left:1px solid #fff;border-right:2px solid #696969;border-bottom:2px solid #696969;text-align:center;font-family:'Liberation Sans',sans-serif;font-size:16px;line-height:45px;color:#000;letter-spacing:.32px">Analyze nmon data</div>
<!-- red annotation -->
<div class="abs" style="left:734.3px;top:326.3px;width:304.8px;height:70.6px;border:3.7px solid #ff2b1c;border-radius:7px"></div>
<svg width="48" height="20" viewBox="0 0 48 20" style="left:988px;top:401px"><path d="M.9 6.1L18 1.7L15.3 6.8L45.9 18.9L12.4 14.6L13.2 19.5Z" fill="#ff2b1c"/></svg>
<div class="abs" style="left:1049.3px;top:421.5px;font-size:33.5px;line-height:44px;color:#ff2b1c;white-space:nowrap;font-family:'Liberation Sans','Noto Sans CJK SC',sans-serif">选择<span style="font-size:36px;letter-spacing:.43px;line-height:30px">nmon</span>文件</div>
<!-- selected cell -->
<div class="abs" style="left:869px;top:846px;width:111px;height:30px;border:2px solid #217346;background:#fff"></div>
<div class="abs" style="left:975px;top:866px;width:7px;height:3px;background:#fff"></div>
<div class="abs" style="left:976px;top:867px;width:5px;height:2px;background:#217346"></div>

</body></html>
